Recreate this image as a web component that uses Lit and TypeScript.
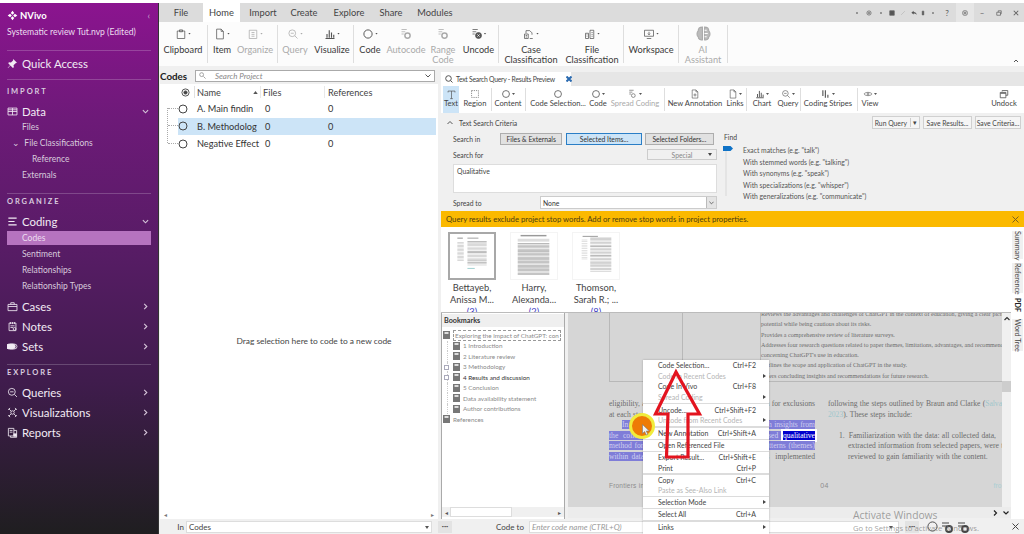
import { LitElement, html, css, svg } from 'lit';
import { customElement } from 'lit/decorators.js';

// 16x16 stroked icons
const paths: Record<string, any> = {
  clipboard: svg`<path d="M3 4h10v10H3zM6 2.500h4V5H6z"/>`,
  page: svg`<path d="M3.500 1.500h6l3 3v10h-9zM9.500 1.500v3h3"/>`,
  organize: svg`<path d="M3 3h10v11H3zM6 6h4M6 8.500h4M6 11h4"/>`,
  search: svg`<circle cx="7" cy="7" r="4.500"/><path d="M10.500 10.500l3.500 3.500M5 7h4"/>`,
  bars: svg`<path d="M2 14h12M4 13V8M7 13V3M10 13V6M13 13V9" stroke-width="1.500"/>`,
  circle: svg`<circle cx="8" cy="8" r="5.500" stroke-width="1.300"/>`,
  autocode: svg`<path d="M2 2h7M2 5h5M2 8h3" /><circle cx="10" cy="10" r="3.500" stroke-width="2"/>`,
  uncode: svg`<path d="M2 2h7M2 5h5M2 8h3" /><circle cx="10" cy="10" r="4" fill="currentColor"/><path d="M8.500 8.500l3 3M11.500 8.500l-3 3" stroke="#fff"/>`,
  caseClass: svg`<path d="M2 14V8h5v6zM4 7V3.500h5M9 3.500l3 3v2.500M9 14h4M3.500 10h2M3.500 12h2"/>`,
  fileClass: svg`<path d="M2 14V7h4v7zM8 14V3h5v11zM3.500 9h1M3.500 11h1M10 6h1.500M10 8.500h1.500M10 11h1.500"/>`,
  workspace: svg`<path d="M2 3h12v8H2zM5 14h6M8 5v4M6.500 7.500L8 9l1.500-1.500"/>`,
  brain: svg`<path d="M7 2C4 2 3 4 3 5.500 1.500 7 1.500 10 3 11c0 2 2 3.500 4 3zM9 2c3 0 4 2 4 3.500 1.500 1.500 1.500 4.500 0 5.500 0 2-2 3.500-4 3z" fill="#bbb"/><path d="M9 5h2M9 8h3M9 11h2" stroke="#fff"/>`,
  textT: svg`<path d="M3 3h10M8 3v11M6 14h4M3 3v2M13 3v2" />`,
  region: svg`<path d="M2.500 2.500h11v11h-11z" stroke-dasharray="2 1.500"/>`,
  annotation: svg`<path d="M3.500 1.500h6l3 3v10h-9zM9.500 1.500v3h3M8 7v5M5.500 9.500h5"/>`,
  stripes: svg`<path d="M3 2v9M7 2v12M11 9v5" stroke-width="1.800"/>`,
  eye: svg`<path d="M1.500 8C4 4.500 12 4.500 14.500 8 12 11.500 4 11.500 1.500 8z"/><circle cx="8" cy="8" r="1.500"/>`,
  spread: svg`<path d="M2 2h7M2 5h5M2 8h3"/><circle cx="8.500" cy="10.500" r="3"/>`,
  undock: svg`<path d="M2 7h9v7H2zM2 7V5.500h9V7M5 4V2.500h9V10h-3" stroke-width="1.300"/>`,
};

const icon = (name: string) => html`<svg class="ico" viewBox="0 0 16 16">${paths[name]}</svg>`;

const sideIcons: Record<string, any> = {
  pin: svg`<path d="M9 1.500l5.500 5.500-2 .5-3 3 .5 3-1.500 1L5 11l-3.500 3.500L1 14l3.500-3.500L1.800 7.700l1-1.500 3 .5 3-3z" fill="currentColor" stroke="none"/>`,
  grid: svg`<path d="M1.500 3h13v10h-13zM1.500 8h13M8 3v10M1.500 5.500h13" />`,
  lines: svg`<path d="M2 3h12M2 8h9M2 13h12" stroke-width="1.800"/>`,
  cases: svg`<path d="M1.500 5h13v9h-13zM5.500 5V2.500h5V5M1.500 8h13"/>`,
  notes: svg`<path d="M3 3h10v11H3zM5 1.500v3M8 1.500v3M11 1.500v3M5 7h6M5 9.500h4"/><circle cx="11" cy="11.500" r="2"/>`,
  sets: svg`<rect x="1.500" y="4.500" width="13" height="7" rx="3.500"/><path d="M5 4.500h6a3.500 3.500 0 0 1 0 7H5a3.500 3.500 0 0 1 0-7z" fill="currentColor" transform="translate(-2.500 0)"/>`,
  queries: svg`<circle cx="7" cy="7" r="5"/><path d="M11 11l3.500 3.500M4.500 7h5"/>`,
  viz: svg`<circle cx="8" cy="8" r="2.500"/><path d="M6 6L3 3M10 6l3-3M6 10l-3 3M10 10l3 3M1.500 4l3-2.500M14.500 4l-3-2.500M1.500 12l3 2.500M14.500 12l-3 2.500"/>`,
  reports: svg`<path d="M2 2h8v11H2zM5 13v2h9V5h-4M4 5h4M4 7.500h4"/><rect x="10" y="10" width="3.500" height="3.500" fill="currentColor"/>`,
};

const ribbon = [
  { w: 48, label: 'Clipboard', i: 'clipboard', drop: 1 },
  { sep: 1 },
  { w: 28, label: 'Item', i: 'page', drop: 1 },
  { w: 38, label: 'Organize', i: 'organize', drop: 1, off: 1 },
  { sep: 4 },
  { w: 34, label: 'Query', i: 'search', drop: 1, off: 1 },
  { w: 40, label: 'Visualize', i: 'bars', drop: 1 },
  { sep: 2 },
  { w: 32, label: 'Code', i: 'circle', drop: 1 },
  { w: 40, label: 'Autocode', i: 'autocode', off: 1 },
  { w: 34, label: 'Range', l2: 'Code', i: 'autocode', off: 1 },
  { w: 37, label: 'Uncode', i: 'uncode', drop: 1 },
  { sep: 2 },
  { w: 64, label: 'Case', l2: 'Classification', i: 'caseClass', drop: 1 },
  { w: 58, label: 'File', l2: 'Classification', i: 'fileClass', drop: 1 },
  { sep: 3 },
  { w: 54, label: 'Workspace', i: 'workspace', drop: 1 },
  { sep: 1 },
  { w: 48, label: 'AI', l2: 'Assistant', i: 'brain', off: 1, big: 1 },
  { sep: 1 },
];

const tools = [
  { w: 16, label: 'Text', i: 'textT', on: 1 },
  { w: 32, label: 'Region', i: 'region' },
  { sep: 1 },
  { w: 32, label: 'Content', i: 'circle', drop: 1 },
  { sep: 2 },
  { w: 64, label: 'Code Selection...', i: 'circle' },
  { w: 16, label: 'Code', i: 'circle', drop: 1 },
  { w: 58, label: 'Spread Coding', i: 'spread', drop: 1, off: 1 },
  { sep: 1 },
  { w: 60, label: 'New Annotation', i: 'annotation' },
  { w: 20, label: 'Links', i: 'page', drop: 1 },
  { sep: 2 },
  { w: 30, label: 'Chart', i: 'bars', drop: 1 },
  { w: 22, label: 'Query', i: 'search', drop: 1 },
  { sep: 2 },
  { w: 54, label: 'Coding Stripes', i: 'stripes', drop: 1 },
  { sep: 3 },
  { w: 24, label: 'View', i: 'eye', drop: 1 },
  { grow: 1 },
  { w: 40, label: 'Undock', i: 'undock' },
];

const tabs = [
  { w: 44, label: 'File' },
  { w: 37, label: 'Home', on: 1 },
  { w: 46, label: 'Import' },
  { w: 36, label: 'Create' },
  { w: 54, label: 'Explore' },
  { w: 30, label: 'Share' },
  { w: 58, label: 'Modules' },
];

// quick access strip, right end of the title bar
const quick = [
  { w: 9, p: svg`<circle cx="4" cy="4" r=".7" fill="#666"/>` },
  { w: 15, p: svg`<circle cx="4" cy="4" r="2.800"/><circle cx="4" cy="4" r="1"/>` },
  { w: 10, p: svg`<circle cx="4" cy="4" r=".7" fill="#666"/>` },
  { w: 11, p: svg`<path d="M1 1h6v6H1z" fill="#555"/>` },
  { w: 12, p: svg`<path d="M1.500 6.500l5-5" stroke="#bbb"/>` },
  { w: 9, p: svg`<path d="M.5 3.500L3.500 1v1.700c2.500 0 3.800 1.300 4 3.800C6.500 5 5.500 4.500 3.500 4.500V6z" fill="#555" stroke="none"/>` },
  { w: 10, p: svg`<path d="M3 1.500h2v5H3z" fill="#444"/>` },
  { w: 10, p: svg`<circle cx="4" cy="4" r=".7" fill="#666"/>` },
  { w: 18, t: '?' },
  { w: 18, p: svg`<rect x="1" y="1" width="6" height="6" rx="2"/><path d="M3 3h2v2H3z"/>`, box: 1 },
  { w: 16, t: '–' },
  { w: 17, p: svg`<path d="M1 3h5v4H1zM3 3V1h4v4H6"/>` },
  { w: 17, p: svg`<path d="M1 1l6 6M7 1L1 7" stroke-width="1.400"/>` },
];

const codes = [
  { name: 'A. Main findin' },
  { name: 'B. Methodolog', on: 1 },
  { name: 'Negative Effect' },
];

const finds = [
  'Exact matches (e.g. "talk")',
  'With stemmed words (e.g. "talking")',
  'With synonyms (e.g. "speak")',
  'With specializations (e.g. "whisper")',
  'With generalizations (e.g. "communicate")',
];

const thumbs = [
  { a: 'Bettayeb,', b: 'Anissa M...', n: 3, on: 1, kind: 0 },
  { a: 'Harry,', b: 'Alexanda...', n: 2, kind: 1 },
  { a: 'Thomson,', b: 'Sarah R.; ...', n: 8, kind: 2 },
];

const bookmarks = [
  { t: '1 Introduction', d: 1 },
  { t: '2 Literature review', d: 1 },
  { t: '3 Methodology', d: 1, plus: 1 },
  { t: '4 Results and discussion', d: 1, plus: 1, bold: 1 },
  { t: '5 Conclusion', d: 1 },
  { t: 'Data availability statement', d: 1 },
  { t: 'Author contributions', d: 1 },
  { t: 'References', d: 0 },
];

// sep: 2 is a roomier separator than sep: 1
const menu = [
  { t: 'Code Selection...', k: 'Ctrl+F2' },
  { t: 'Code In Recent Codes', off: 1, more: 1 },
  { t: 'Code In Vivo', k: 'Ctrl+F8' },
  { t: 'Spread Coding', off: 1, more: 1 },
  { sep: 2 },
  { t: 'Uncode...', k: 'Ctrl+Shift+F2' },
  { t: 'Uncode from Recent Codes', off: 1, more: 1 },
  { sep: 2 },
  { t: 'New Annotation', k: 'Ctrl+Shift+A' },
  { sep: 1 },
  { t: 'Open Referenced File' },
  { sep: 1 },
  { t: 'Export Result...', k: 'Ctrl+Shift+E' },
  { t: 'Print', k: 'Ctrl+P' },
  { sep: 1 },
  { t: 'Copy', k: 'Ctrl+C' },
  { t: 'Paste as See-Also Link', off: 1 },
  { sep: 1 },
  { t: 'Selection Mode', more: 1 },
  { sep: 1 },
  { t: 'Select All', k: 'Ctrl+A' },
  { sep: 2 },
  { t: 'Links', more: 1 },
];

const tableText = [
  'Reviews the advantages and challenges of ChatGPT in the context of education, giving a clear picture of its',
  'potential while being cautious about its risks.',
  'Provides a comprehensive review of literature surveys.',
  'Addresses four research questions related to paper themes, limitations, advantages, and recommendations',
  "concerning ChatGPT's use in education.",
  'Outlines the scope and application of ChatGPT in the study.',
  'Offers concluding insights and recommendations for future research.',
];

@customElement('app-root')
export class AppRoot extends LitElement {
  static styles = css`
    :host {
      display: block;
      position: relative;
      width: 1024px;
      height: 534px;
      overflow: hidden;
      background: #fff;
      font-family: Lato, "Open Sans", sans-serif;
      color: #333;
      font-size: 9.500px;
    }
    .shell { display: flex; height: 531px; margin-top: 3px; }

    /* sidebar */
    .side {
      flex: none;
      box-sizing: border-box;
      padding: 0 7px;
      border-right: 1px solid #333;
      width: 159px;
      background: linear-gradient(#8b148f 0%, #6d1a78 22%, #561c64 48%, #3f1c4c 72%, #1f1e20 100%);
      color: #e4dbe7;
    }
    .brand { display: flex; align-items: center; gap: 2px; height: 12px; margin-top: 6px; font-size: 9.500px; font-weight: 700; color: #fff; }
    .brand svg { width: 11px; height: 11px; fill: #fff; }
    .brand .back { margin-left: auto; margin-right: 1px; font-weight: 400; color: #c9a9cf; font-size: 9px; }
    .proj { font-size: 8.600px; margin-top: 5px; height: 12px; line-height: 12px; white-space: nowrap; color: #ecdff0; }
    .hr { height: 1px; background: rgba(255, 255, 255, .2); }
    .sect { font-size: 7.500px; letter-spacing: 1.900px; height: 12px; line-height: 12px; color: #d9ccdf; font-weight: 700; }
    .main-item { display: flex; align-items: center; height: 20px; font-size: 11.400px; gap: 4px; color: #f2ebf4; }
    .main-item svg.m { width: 11px; height: 11px; fill: none; stroke: currentColor; stroke-width: 1.200; flex: none; }
    .main-item .chev { margin-left: auto; width: 7px; height: 7px; margin-right: 2px; fill: none; stroke: #d4c4d8; stroke-width: 1.300; }
    .sub { height: 16px; line-height: 16px; font-size: 8.500px; padding-left: 15px; color: #d8cadc; white-space: nowrap; }
    .sub.tri { padding-left: 5px; }
    .sub.deep { padding-left: 25px; }
    .sub.on { height: 14px; line-height: 14px; background: #b673bf; margin: 0 0 1px; color: #ecdcef; }

    /* main column */
    .main { flex: 1; min-width: 0; display: flex; flex-direction: column; background: #f0f0f0; }
    .tabs { display: flex; height: 19px; background: #dcdcdc; align-items: stretch; flex: none; }
    .tab { text-align: center; line-height: 19px; font-size: 9.300px; color: #444; }
    .tab.on { background: #fff; }
    .winbtns { margin-left: auto; display: flex; align-items: center; color: #555; font-size: 8px; }
    .wb { display: flex; justify-content: center; align-items: center; height: 100%; }
    .wb svg { width: 6px; height: 6px; fill: none; stroke: #666; stroke-width: 1; }
    .wb.box { background: #e6e6e6; }
    .ribbon { display: flex; height: 44px; background: #fcfcfc; flex: none; position: relative; }
    .rib { flex: none; display: flex; flex-direction: column; align-items: center; padding-top: 5px; box-sizing: border-box; white-space: nowrap; color: #3a3a3a; line-height: 10px; font-size: 9.200px; }
    .rib.off { color: #aaa; }
    .rib .top { height: 13px; display: flex; align-items: center; gap: 1px; margin-bottom: 5px; color: #555; }
    .rib.off .top { color: #aaa; }
    .ico { width: 12px; height: 12px; fill: none; stroke: currentColor; stroke-width: 1; }
    .rib.big .ico { width: 17px; height: 17px; }
    .rib .dr { width: 3px; height: 2px; background: currentColor; clip-path: polygon(0 0, 100% 0, 50% 100%); }
    .rsep { flex: none; box-sizing: border-box; margin: 3px 0; border-right: 1px solid #dedede; }
    .collapse { position: absolute; right: 5px; bottom: 3px; width: 6px; height: 5px; fill: none; stroke: #555; }

    .body { flex: 1; display: flex; min-height: 0; padding: 1px 0 0 1px; gap: 3px; }
    .left { width: 278px; flex: none; display: flex; flex-direction: column; background: #fff; }
    .lhead { display: flex; align-items: center; height: 17px; background: #f0f0f0; flex: none; }
    .lhead b { font-size: 9.800px; font-weight: 700; width: 35px; color: #222; }
    .searchbox { width: 240px; height: 12px; box-sizing: border-box; border: 1px solid #aaa; background: #fff; display: flex; align-items: center; padding: 0 3px; font-size: 8px; font-style: italic; color: #888; gap: 9px; }
    .searchbox svg { width: 7px; height: 7px; fill: none; stroke: #999; }
    .searchbox .end { margin-left: auto; width: 6px; height: 4px; stroke: #555; }
    .thead { display: grid; grid-template-columns: 35px 66px 64px 1fr; height: 16px; align-items: center; font-size: 9.200px; color: #444; }
    .thead span { display: flex; align-items: center; height: 12px; }
    .thead .rad { justify-content: flex-end; padding-right: 4px; border-right: 1px solid #e0e0e0; }
    .thead .nm { padding-left: 2px; justify-content: space-between; padding-right: 2px; border-right: 1px solid #e8e8e8; }
    .thead .fl { padding-left: 2px; border-right: 1px solid #e8e8e8; }
    .thead .rf { padding-left: 3px; }
    .rows { position: relative; margin-left: 18px; margin-right: 2px; }
    .row { display: grid; grid-template-columns: 19px 68px 63px 1fr; height: 17.500px; align-items: center; font-size: 9.200px; color: #333; }
    .row.on { background: #cce4f7; }
    .row svg { width: 10px; height: 10px; fill: none; stroke: #444; stroke-width: 1; }
    .tree { position: absolute; left: -11px; top: 8px; width: 10px; height: 35px; border-left: 1px dotted #aaa; }
    .tree i { position: absolute; left: 0; width: 10px; border-top: 1px dotted #aaa; }
    .drop { flex: 1; display: flex; align-items: center; justify-content: center; font-size: 8.400px; color: #444; padding: 20px 0 0 30px; }
    .hbar { display: flex; justify-content: space-between; align-items: center; height: 8px; font-size: 6px; color: #777; padding: 0 4px; margin-bottom: 1px; flex: none; }

    .right { flex: 1; min-width: 0; display: flex; flex-direction: column; }
    .rtabs { height: 14px; flex: none; margin-top: 5px; background: #e6e6e6; display: flex; }
    .doc-tab { width: 130px; background: #fff; display: flex; align-items: center; gap: 3px; padding-left: 4px; font-size: 6.800px; letter-spacing: -.25px; color: #444; box-sizing: border-box; white-space: nowrap; }
    .doc-tab svg { width: 8px; height: 8px; fill: none; stroke: #555; flex: none; }
    .doc-tab .x { margin-left: 8px; stroke: #2a6ab0; stroke-width: 2; width: 6px; height: 6px; }
    .tools { display: flex; height: 27px; background: #fff; flex: none; padding-left: 2px; }
    .tool { flex: none; display: flex; flex-direction: column; align-items: center; white-space: nowrap; line-height: 9px; font-size: 7.600px; color: #444; padding-top: 2px; box-sizing: border-box; }
    .tool.on { background: #cce4f7; }
    .tool.off { color: #aaa; }
    .tool .top { height: 12px; display: flex; gap: 1px; align-items: center; margin-bottom: -1px; color: #555; }
    .tool .dr { width: 3px; height: 2px; background: currentColor; clip-path: polygon(0 0, 100% 0, 50% 100%); }
    .tool .ico { width: 10px; height: 10px; }
    .tool.on .ico { width: 11px; height: 11px; }
    .tsep { flex: none; box-sizing: border-box; margin: 2px 0; border-right: 1px solid #dedede; }

    .criteria { height: 98px; flex: none; background: #f0f0f0; box-sizing: border-box; font-size: 6.800px; color: #444; padding-top: 3px; }
    .crit-head { display: flex; align-items: center; height: 13px; padding-left: 6px; gap: 6px; padding-right: 3px; }
    .crit-head svg { width: 6px; height: 5px; fill: none; stroke: #555; }
    .crit-head .acts { margin-left: auto; display: flex; gap: 3px; }
    .btn { height: 13px; display: flex; align-items: center; justify-content: center; border: 1px solid #d0d0d0; background: #f5f5f5; box-sizing: border-box; color: #444; white-space: nowrap; }
    .crit-body { display: flex; margin-top: 4px; }
    .crit-l { width: 277px; flex: none; padding-left: 12px; box-sizing: border-box; display: flex; flex-direction: column; }
    .line { display: flex; align-items: center; }
    .line > label { width: 47px; flex: none; }
    .seg { height: 12px; background: #e1e1e1; border: 1px solid #adadad; margin-right: 4px; box-sizing: border-box; display: flex; align-items: center; justify-content: center; white-space: nowrap; color: #333; }
    .seg.on { background: #cce4f7; border-color: #2a7ec6; margin-right: 3px; }
    .special { margin: 4px 0 0 194px; width: 70px; height: 11px; box-sizing: border-box; border: 1px solid #ccc; display: flex; align-items: center; justify-content: center; color: #888; position: relative; }
    .special::after { content: ""; position: absolute; right: 4px; top: 3px; border: 2px solid transparent; border-top: 3px solid #444; }
    .sfor { margin-top: -9px; height: 11px; }
    .area { width: 264px; height: 29px; margin-top: 2px; box-sizing: border-box; background: #fff; border: 1px solid #ddd; padding: 2px 3px; color: #444; }
    .spread { margin-top: 3px; height: 13px; }
    .spread label { width: 87px; }
    .spread .sel { width: 177px; height: 13px; background: #fff; box-sizing: border-box; border: 1px solid #ccc; display: flex; align-items: center; padding-left: 2px; justify-content: space-between; color: #333; }
    .spread .sel i { width: 9px; height: 11px; background: #e4e4e4; border-left: 1px solid #bbb; display: flex; align-items: center; justify-content: center; }
    .spread .sel svg { width: 5px; height: 4px; fill: none; stroke: #555; }
    .crit-r { flex: 1; padding-left: 6px; }
    .find-rows { display: flex; margin-top: 4px; }
    .slider { width: 13px; flex: none; margin-right: 6px; position: relative; margin-top: 1px; height: 50px; }
    .slider::before { content: ""; position: absolute; left: 1px; width: 2px; top: 0; bottom: 0; background: #e4e4e4; }
    .slider i { position: absolute; left: -1px; top: 0; width: 10px; height: 5px; background: #0f72c6; clip-path: polygon(0 0, 75% 0, 100% 50%, 75% 100%, 0 100%); }
    .opt { height: 11.500px; line-height: 11.500px; white-space: nowrap; color: #555; }

    .banner { height: 16px; flex: none; background: #fbb900; display: flex; align-items: center; justify-content: space-between; padding: 0 5px; font-size: 7.700px; color: #4a3c14; }
    .banner svg { width: 7px; height: 7px; fill: none; stroke: #7a6220; }

    .lower { flex: 1; display: flex; min-height: 0; }
    .lower-main { flex: 1; min-width: 0; display: flex; flex-direction: column; }
    .strip { width: 13px; flex: none; background: #fff; display: flex; flex-direction: column; padding-top: 4px; box-sizing: border-box; }
    .vt { writing-mode: vertical-rl; font-size: 7.200px; background: #f0f0f0; color: #444; text-align: center; white-space: nowrap; width: 11px; margin: 0 0 4px 1px; line-height: 11px; flex: none; }
    .vt.on { background: #fff; font-weight: 700; color: #222; margin-bottom: 6px; }
    .shots { height: 86px; flex: none; background: #fff; display: flex; overflow: hidden; border-bottom: 1px solid #bbb; box-sizing: border-box; }
    .shot { width: 62px; flex: none; display: flex; flex-direction: column; align-items: center; font-size: 9.300px; color: #444; line-height: 12px; padding-top: 5px; box-sizing: border-box; white-space: nowrap; }
    .shot svg { width: 48px; height: 48px; box-sizing: border-box; border: 1px solid #f4f4f4; margin-bottom: 2px; flex: none; }
    .shot.on svg { border: 2px solid #a8a8a8; }
    .shot .n { color: #3b3bc4; text-decoration: underline; }
    .split { flex: 1; display: flex; min-height: 0; }
    .marks { width: 124px; flex: none; display: flex; flex-direction: column; background: #fff; border: 1px solid #aaa; border-width: 0 1px 0 1px; box-sizing: border-box; font-size: 6.300px; color: #8a8a8a; }
    .marks-h { height: 13px; background: #efefef; font-weight: 700; font-size: 7.200px; line-height: 13px; padding-left: 2px; color: #333; margin-top: 1px; flex: none; }
    .bm { display: flex; align-items: center; height: 10.500px; white-space: nowrap; position: relative; }
    .bm svg { width: 7px; height: 8px; flex: none; margin-right: 3px; }
    .bm.root { padding-left: 1px; margin-top: 3px; }
    .bm.root span { border: 1px dashed #999; padding: 0 1px; line-height: 9px; }
    .bm.kid { padding-left: 11px; }
    .bm.kid::before { content: ""; position: absolute; left: 5px; top: 0; bottom: 0; border-left: 1px dotted #ccc; }
    .bm.flat { padding-left: 1px; }
    .bm.bold { color: #333; }
    .bm .plus { position: absolute; left: 2px; top: 3px; width: 3px; height: 3px; border: 1px solid #aab; background: #fff; z-index: 1; }
    .mscroll { margin-top: auto; height: 10px; background: #f0f0f0; display: flex; align-items: center; justify-content: space-between; padding: 0 3px; font-size: 6px; color: #555; margin-bottom: 2px; flex: none; }
    .mscroll i { width: 62px; height: 10px; background: #fff; border: 1px solid #ddd; box-sizing: border-box; margin: 0 auto 0 2px; }

    .pane { flex: 1; min-width: 0; display: flex; flex-direction: column; margin-left: 3px; background: #f0f0f0; }
    .pane-top { flex: 1; min-height: 0; display: flex; }
    .page { flex: 1; min-width: 0; background: #d6d6d6; overflow: hidden; font-family: "Liberation Serif", serif; color: #6c6c6c; font-size: 7.600px; word-spacing: .4px; line-height: 10.500px; white-space: nowrap; }
    .tbl { display: grid; grid-template-columns: 73px 78px 1fr; margin-left: 41px; height: 69px; border-bottom: 1px solid #b8b8b8; border-left: 1px solid #b8b8b8; box-sizing: border-box; overflow: hidden; font-size: 6.100px; word-spacing: 0; line-height: 10.300px; }
    .tbl .c { border-right: 1px solid #b8b8b8; }
    .tbl .t { margin-top: -4px; }
    .cols { display: grid; grid-template-columns: 206px 1fr; column-gap: 13px; margin: 17px 0 0 41px; }
    .lc div { height: 10.500px; }
    .lc .j { text-align-last: justify; }
    .lc .in { padding-left: 13px; }
    .hl { background: #7f7dd8; color: #cfcff0; }
    .hl2 { background: #0000cd; color: #fff; box-shadow: 0 0 0 2px #fff; }
    .rc { overflow: hidden; }
    .rc .li { display: flex; gap: 4px; margin-top: 10.500px; padding-left: 11px; }
    .rc .li2 { padding-left: 20px; }
    .rc a { color: #9fc6cc; }
    .foot { display: flex; margin: 19px 0 0 41px; font-family: "Liberation Sans", sans-serif; font-size: 6.500px; letter-spacing: .2px; color: #8d8d8d; }
    .foot .pg { margin-left: 176px; font-size: 7px; }
    .foot .fr { margin-left: 165px; color: #a9cfd4; }
    .vscroll { width: 9px; flex: none; background: #f0f0f0; display: flex; flex-direction: column; align-items: center; padding-top: 3px; box-sizing: border-box; }
    .vscroll svg { width: 6px; height: 5px; fill: none; stroke: #333; stroke-width: 1.200; }
    .vscroll i { display: block; width: 100%; height: 11px; background: #cdcdcd; margin-top: 60px; }
    .hscroll { height: 11px; margin-bottom: 1px; flex: none; display: flex; justify-content: flex-end; align-items: center; gap: 5px; padding-right: 2px; background: #ececec; }
    .hscroll svg { width: 5px; height: 6px; fill: none; stroke: #222; stroke-width: 1.200; }

    .bottom { height: 15px; flex: none; display: flex; align-items: center; font-size: 8px; color: #444; background: #f0f0f0; }
    .bottom .in { width: 27px; text-align: right; padding-right: 2px; box-sizing: border-box; }
    .bottom .box { height: 12px; background: #fff; border: 1px solid #ddd; box-sizing: border-box; display: flex; align-items: center; padding-left: 2px; justify-content: space-between; }
    .bottom .box.a { width: 246px; }
    .bottom .box.b { width: 370px; font-style: italic; color: #999; padding-right: 3px; }
    .bottom .tri { border: 2px solid transparent; border-top: 3px solid #555; margin-top: 3px; margin-right: 2px; }
    .bottom .dots { width: 14px; height: 12px; background: #e3e3e3; margin-left: 6px; text-align: center; line-height: 10px; font-weight: 700; color: #555; font-size: 8px; }
    .bottom .codeto { width: 44px; margin: 0 5px 0 28px; text-align: right; white-space: nowrap; }
    .bottom svg { flex: none; fill: none; stroke: #444; }
    .bottom .c1 { width: 11px; height: 11px; margin-left: 8px; }
    .bottom .c2 { width: 12px; height: 12px; margin-left: 3px; }
    .bottom .c3 { width: 12px; height: 12px; margin-left: 4px; }
    .bottom .bx { width: 7px; height: 7px; margin-left: auto; margin-right: 5px; }

    /* things floating over the page */
    .ctx { position: absolute; left: 643px; top: 360px; width: 126px; height: 174px; background: #fff; box-shadow: 0 0 2px rgba(0, 0, 0, .25); font-size: 7px; color: #444; overflow: hidden; }
    .mi { display: flex; align-items: center; height: 10.500px; padding: 0 3px 0 15px; white-space: nowrap; }
    .mi.off { color: #b5b5b5; }
    .mi .k { margin-left: auto; margin-right: 10px; }
    .mi .more { border: 2px solid transparent; border-left: 3px solid #444; margin-left: auto; margin-right: -2px; }
    .ms { height: 1.500px; background: #dcdcdc; }
    .ms.wide { margin: .5px 0; }
    .arrow { position: absolute; left: 650px; top: 368px; width: 56px; height: 94px; fill: none; stroke: #e3141f; stroke-width: 3.200; }
    .hilite { position: absolute; left: 629px; top: 413px; width: 26px; height: 26px; box-sizing: border-box; border-radius: 50%; background: #ee7b06; border: 3px solid #f1ec3c; }
    .cursor { position: absolute; left: 642px; top: 424px; width: 8px; height: 12px; fill: #f2f2f2; stroke: #777; stroke-width: .6; }
    .wm { position: absolute; left: 853px; top: 508px; color: rgba(130, 130, 130, .75); font-family: "Open Sans", sans-serif; line-height: 12px; white-space: nowrap; pointer-events: none; }
    .wm b { display: block; font-weight: 400; font-size: 10.300px; line-height: 14px; }
    .wm span { font-size: 7.700px; }
  `;

  private chev(open: boolean) {
    return html`<svg class="chev" viewBox="0 0 8 8"><path d=${open ? 'M1 2.500l3 3 3-3' : 'M2.500 1l3 3-3 3'}></path></svg>`;
  }

  private mainItem(i: string, label: string, open = false) {
    return html`<div class="main-item">
      <svg class="m" viewBox="0 0 16 16">${sideIcons[i]}</svg><span>${label}</span>${this.chev(open)}
    </div>`;
  }

  private renderSide() {
    return html`<aside class="side">
      <div class="brand">
        <svg viewBox="0 0 16 16"><path d="M8 1l2.500 3.500L8 7 5.500 4.500zM8 9l2.500 2.500L8 15l-2.500-3.500zM1 8l3.500-2.500L7 8l-2.500 2.500zM9 8l2.500-2.500L15 8l-3.500 2.500z"></path></svg>
        NVivo<span class="back">‹</span>
      </div>
      <div class="proj">Systematic review Tut.nvp (Edited)</div>
      <div class="hr" style="margin-top:12px"></div>
      <div class="main-item" style="margin-top:1px;height:22px"><svg class="m" viewBox="0 0 16 16">${sideIcons.pin}</svg><span>Quick Access</span></div>
      <div class="hr" style="margin-top:5px"></div>
      <div class="sect" style="margin-top:6px">IMPORT</div>
      <div style="height:3px"></div>
      ${this.mainItem('grid', 'Data', true)}
      <div class="sub" style="margin-top:-2px">Files</div>
      <div class="sub tri">⌄&nbsp;&nbsp;File Classifications</div>
      <div class="sub deep">Reference</div>
      <div class="sub">Externals</div>
      <div class="hr" style="margin-top:10px"></div>
      <div class="sect" style="margin-top:2px">ORGANIZE</div>
      <div style="height:3px"></div>
      ${this.mainItem('lines', 'Coding', true)}
      <div class="sub on">Codes</div>
      <div class="sub" style="margin-top:1px">Sentiment</div>
      <div class="sub">Relationships</div>
      <div class="sub">Relationship Types</div>
      <div style="height:2px"></div>
      ${this.mainItem('cases', 'Cases')}
      ${this.mainItem('notes', 'Notes')}
      ${this.mainItem('sets', 'Sets')}
      <div class="hr" style="margin-top:8px"></div>
      <div class="sect" style="margin-top:2px">EXPLORE</div>
      <div style="height:3px"></div>
      ${this.mainItem('queries', 'Queries')}
      ${this.mainItem('viz', 'Visualizations')}
      ${this.mainItem('reports', 'Reports')}
    </aside>`;
  }

  private renderTabs() {
    return html`<div class="tabs">
      ${tabs.map(t => html`<div class="tab ${t.on ? 'on' : ''}" style="width:${t.w}px">${t.label}</div>`)}
      <div class="winbtns">
        ${quick.map(q => html`<div class="wb ${q.box ? 'box' : ''}" style="width:${q.w}px">
          ${q.t ? q.t : html`<svg viewBox="0 0 8 8">${q.p}</svg>`}
        </div>`)}
      </div>
    </div>`;
  }

  private renderRibbon() {
    return html`<div class="ribbon">
      ${ribbon.map(r => r.sep
        ? html`<div class="rsep" style="width:${r.sep}px"></div>`
        : html`<div class="rib ${r.off ? 'off' : ''} ${r.big ? 'big' : ''}" style="width:${r.w}px">
            <div class="top">${icon(r.i!)}${r.drop ? html`<i class="dr"></i>` : ''}</div>
            <span>${r.label}</span>${r.l2 ? html`<span>${r.l2}</span>` : ''}
          </div>`)}
      <svg class="collapse" viewBox="0 0 6 5"><path d="M1 4l2-2 2 2"></path></svg>
    </div>`;
  }

  private renderLeft() {
    return html`<section class="left">
      <div class="lhead">
        <b>Codes</b>
        <div class="searchbox">
          <svg viewBox="0 0 8 8"><circle cx="3" cy="3" r="2.200"></circle><path d="M5 5l2.500 2.500"></path></svg>
          <span>Search Project</span>
          <svg class="end" viewBox="0 0 6 4"><path d="M.5.500l2.500 2.500 2.500-2.500"></path></svg>
        </div>
      </div>
      <div class="thead">
        <span class="rad"><svg width="9" height="9" viewBox="0 0 10 10" fill="none" stroke="#444"><circle cx="5" cy="5" r="4"></circle><circle cx="5" cy="5" r="1.800" fill="#444"></circle></svg></span>
        <span class="nm">Name<svg width="5" height="3" viewBox="0 0 6 4"><path d="M0 4l3-4 3 4z" fill="#555"></path></svg></span>
        <span class="fl">Files</span>
        <span class="rf">References</span>
      </div>
      <div class="rows">
        <div class="tree"><i style="top:0"></i><i style="top:17px"></i><i style="top:35px"></i></div>
        ${codes.map(c => html`<div class="row ${c.on ? 'on' : ''}">
          <svg viewBox="0 0 10 10"><circle cx="5" cy="5" r="4"></circle></svg>
          <span>${c.name}</span><span>0</span><span>0</span>
        </div>`)}
      </div>
      <div class="drop">Drag selection here to code to a new code</div>
      <div class="hbar"><span>◂</span><span>▸</span></div>
    </section>`;
  }

  private renderCriteria() {
    return html`<div class="criteria">
      <div class="crit-head">
        <svg viewBox="0 0 6 5"><path d="M.5 4l2.500-2.500L5.500 4"></path></svg>
        <span>Text Search Criteria</span>
        <div class="acts">
          <div class="btn" style="width:48px">Run Query&nbsp;&nbsp;<span style="border-left:1px solid #ccc;padding-left:2px">▾</span></div>
          <div class="btn" style="width:49px">Save Results...</div>
          <div class="btn" style="width:46px">Save Criteria...</div>
        </div>
      </div>
      <div class="crit-body">
        <div class="crit-l">
          <div class="line">
            <label>Search in</label>
            <div class="seg" style="width:63px">Files &amp; Externals</div>
            <div class="seg on" style="width:76px">Selected Items...</div>
            <div class="seg" style="width:70px">Selected Folders...</div>
          </div>
          <div class="special">Special</div>
          <div class="sfor">Search for</div>
          <div class="area">Qualitative</div>
          <div class="line spread">
            <label>Spread to</label>
            <div class="sel">None<i><svg viewBox="0 0 6 4"><path d="M.5.500l2.500 2.500 2.500-2.500"></path></svg></i></div>
          </div>
        </div>
        <div class="crit-r">
          <div>Find</div>
          <div class="find-rows">
            <div class="slider"><i></i></div>
            <div>${finds.map(f => html`<div class="opt">${f}</div>`)}</div>
          </div>
        </div>
      </div>
    </div>`;
  }

  // tiny page previews, one layout for each of the three sources
  private renderThumb(kind: number) {
    const rows = Array.from({ length: 24 }, (_, k) => k);
    return html`<svg viewBox="0 0 48 48">
      <rect width="48" height="48" fill="#fff"></rect>
      ${kind === 0 ? svg`
        <rect x="8" y="4" width="6" height="1" fill="#888"></rect>
        <rect x="19" y="4" width="12" height="1" fill="#999"></rect>
        ${rows.slice(0, 14).map(k => svg`<rect x="8" y=${9 + k * 1.500} width="7" height=".6" fill="#bbb"></rect>`)}
        ${rows.slice(0, 18).map(k => svg`<rect x="19" y=${8 + k * 1.500} width="21" height=".6" fill=${k % 7 < 2 ? '#888' : '#bbb'}></rect>`)}
        <rect x="19" y="37" width="8" height="1" fill="#9cc"></rect>
      ` : kind === 1 ? svg`
        <rect x="10" y="2" width="27" height="1.500" fill="#999"></rect>
        <rect x="7" y="6" width="33" height="3" fill="#ddd"></rect>
        ${rows.map(k => svg`<rect x="7" y=${11 + k * 1.400} width="33" height=".6" fill=${k % 6 === 0 ? '#666' : '#999'}></rect>`)}
      ` : svg`
        <rect x="10" y="3" width="16" height="1" fill="#999"></rect>
        ${rows.slice(0, 12).map(k => svg`<rect x="9" y=${7 + k * 1.800} width="6" height=".6" fill="#ccc"></rect>`)}
        ${rows.map(k => svg`<rect x="18" y=${5 + k * 1.500} width="22" height=".6" fill=${k % 6 < 1 ? '#888' : '#b0b0b0'}></rect>`)}
      `}
    </svg>`;
  }

  private renderMarks() {
    const page = html`<svg viewBox="0 0 7 8"><path d="M0 0h7v8H0z" fill="#777"></path><path d="M1.500 1h4v2h-4z" fill="#ddd"></path></svg>`;
    return html`<div class="marks">
      <div class="marks-h">Bookmarks</div>
      <div class="bm root">${page}<span>Exploring the impact of ChatGPT: con</span></div>
      ${bookmarks.map(b => html`<div class="bm ${b.d ? 'kid' : 'flat'} ${b.bold ? 'bold' : ''}">
        ${b.plus ? html`<i class="plus"></i>` : ''}${page}${b.t}
      </div>`)}
      <div class="mscroll"><span>◂</span><i></i><span>▸</span></div>
    </div>`;
  }

  private renderPage() {
    return html`<div class="page">
      <div class="tbl">
        <div class="c"></div><div class="c"></div>
        <div class="t">${tableText.map(t => html`<div>${t}</div>`)}</div>
      </div>
      <div class="cols">
        <div class="lc">
          <div class="j">eligibility, and we then applied the specified criteria for exclusions</div>
          <div>at each stage</div>
          <div class="j in"><span class="hl">In this study, we aimed to extract more in-depth insights from</span></div>
          <div class="j"><span class="hl">the collected papers, and for this reason we used </span><span class="hl2">qualitative</span></div>
          <div class="j"><span class="hl">method for identifying, analyzing, and reporting patterns (themes)</span></div>
          <div class="j"><span class="hl">within data, a thematic analysis approach that wa</span>s &nbsp;implemented</div>
        </div>
        <div class="rc">
          <div>following the steps outlined by Braun and Clarke (<a>Salva</a></div>
          <div><a>2023</a>). These steps include:</div>
          <div class="li"><span>1.</span><span>Familiarization with the data: all collected data,</span></div>
          <div class="li2">extracted information from selected papers, were t</div>
          <div class="li2">reviewed to gain familiarity with the content.</div>
        </div>
      </div>
      <div class="foot"><span>Frontiers in</span><span class="pg">04</span><span class="fr">front</span></div>
    </div>`;
  }

  private renderRight() {
    return html`<section class="right">
      <div class="rtabs">
        <div class="doc-tab">
          <svg viewBox="0 0 8 8"><circle cx="3.500" cy="3.500" r="2.800"></circle><path d="M5.500 5.500l2 2"></path></svg>
          Text Search Query - Results Preview
          <svg class="x" viewBox="0 0 6 6"><path d="M.5.500l5 5M5.500.500l-5 5"></path></svg>
        </div>
      </div>
      <div class="tools">
        ${tools.map(t => t.grow
          ? html`<div style="flex:1"></div>`
          : t.sep
            ? html`<div class="tsep" style="width:${t.sep}px"></div>`
            : html`<div class="tool ${t.on ? 'on' : ''} ${t.off ? 'off' : ''}" style="width:${t.w}px">
                <div class="top">${icon(t.i!)}${t.drop ? html`<i class="dr"></i>` : ''}</div>
                <span>${t.label}</span>
              </div>`)}
      </div>
      ${this.renderCriteria()}
      <div class="banner">
        <span>Query results exclude project stop words. Add or remove stop words in project properties.</span>
        <svg viewBox="0 0 7 7"><path d="M.5.500l6 6M6.500.500l-6 6"></path></svg>
      </div>
      <div class="lower">
        <div class="lower-main">
          <div class="shots">
            ${thumbs.map(t => html`<div class="shot ${t.on ? 'on' : ''}">
              ${this.renderThumb(t.kind)}
              <span>${t.a}</span><span>${t.b}</span><span class="n">(${t.n})</span>
            </div>`)}
          </div>
          <div class="split">
            ${this.renderMarks()}
            <div class="pane">
              <div class="pane-top">
                ${this.renderPage()}
                <div class="vscroll">
                  <svg viewBox="0 0 6 5"><path d="M.5 4l2.500-2.500L5.500 4"></path></svg>
                  <i></i>
                </div>
              </div>
              <div class="hscroll">
                <svg viewBox="0 0 5 6"><path d="M1 .5l2.500 2.500L1 5.500"></path></svg>
                <svg viewBox="0 0 6 5" style="width:6px"><path d="M.5 1l2.500 2.500L5.500 1"></path></svg>
              </div>
            </div>
          </div>
        </div>
        <div class="strip">
          <div class="vt" style="height:28px">Summary</div>
          <div class="vt" style="height:30px">Reference</div>
          <div class="vt on" style="height:16px">PDF</div>
          <div class="vt" style="height:32px">Word Tree</div>
        </div>
      </div>
    </section>`;
  }

  private renderBottom() {
    return html`<div class="bottom">
      <span class="in">In</span>
      <div class="box a">Codes<i class="tri"></i></div>
      <div class="dots">···</div>
      <span class="codeto">Code to</span>
      <div class="box b">Enter code name (CTRL+Q)<i class="tri"></i></div>
      <div class="dots">···</div>
      <svg class="c1" viewBox="0 0 12 12"><circle cx="6" cy="6" r="5"></circle></svg>
      <svg class="c2" viewBox="0 0 12 12"><path d="M1 2h7M1 5h5"></path><circle cx="8" cy="8" r="3" stroke-width="2"></circle></svg>
      <svg class="c3" viewBox="0 0 12 12"><path d="M1 2h7M1 5h5"></path><circle cx="8" cy="8" r="3" stroke-width="2"></circle></svg>
      <svg class="bx" viewBox="0 0 7 7"><path d="M.5.500l6 6M6.500.500l-6 6"></path></svg>
    </div>`;
  }

  private renderOverlays() {
    return html`
      <div class="ctx">
        ${menu.map(m => m.sep
          ? html`<div class="ms ${m.sep === 2 ? 'wide' : ''}"></div>`
          : html`<div class="mi ${m.off ? 'off' : ''}">
              <span>${m.t}</span>
              ${m.k ? html`<span class="k">${m.k}</span>` : ''}
              ${m.more ? html`<i class="more"></i>` : ''}
            </div>`)}
      </div>
      <svg class="arrow" viewBox="0 0 56 94">
        <path d="M26 4L5.500 46H18L16.500 89H38L38 46H49.500z"></path>
      </svg>
      <div class="hilite"></div>
      <svg class="cursor" viewBox="0 0 8 12"><path d="M.5.500v9l2.200-2 1.500 3.500 1.600-.7-1.500-3.300h3z"></path></svg>
      <div class="wm"><b>Activate Windows</b><span>Go to Settings to activate Windows.</span></div>
    `;
  }

  render() {
    return html`<div class="shell">
        ${this.renderSide()}
        <div class="main">
          ${this.renderTabs()}
          ${this.renderRibbon()}
          <div class="body">
            ${this.renderLeft()}
            ${this.renderRight()}
          </div>
          ${this.renderBottom()}
        </div>
      </div>
      ${this.renderOverlays()}`;
  }
}
